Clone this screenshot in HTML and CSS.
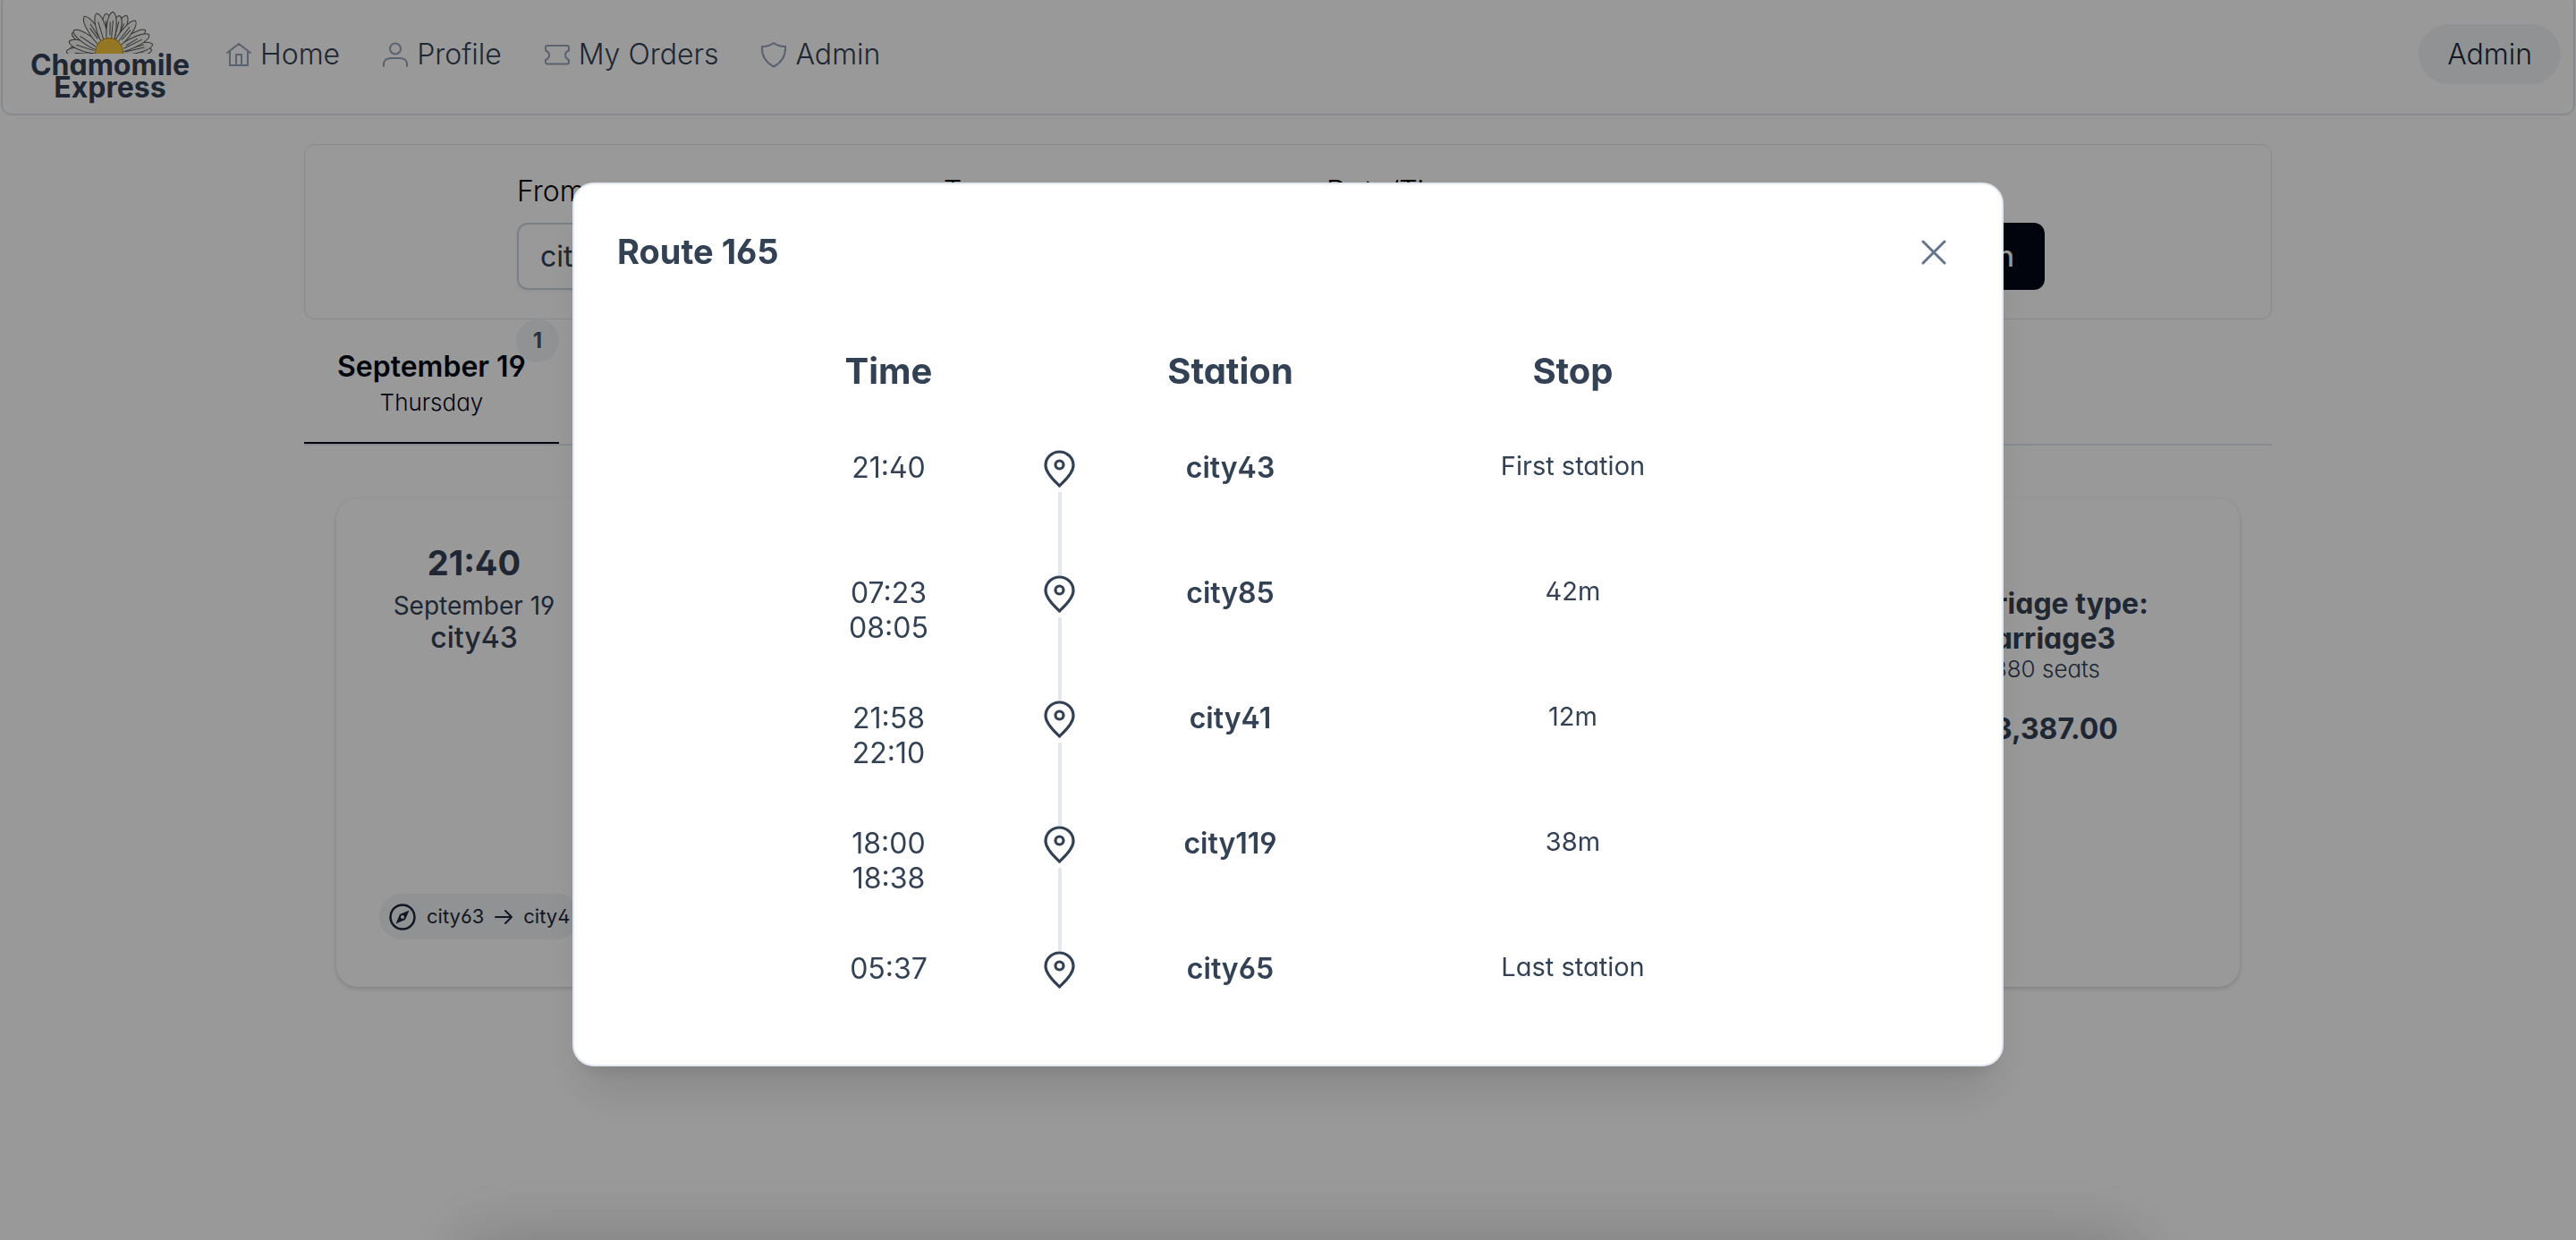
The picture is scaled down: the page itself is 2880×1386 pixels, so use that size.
FILE: index.html
```html
<!DOCTYPE html>
<html lang="en">
<head>
<meta charset="utf-8">
<title>Chamomile Express</title>
<link rel="stylesheet" href="styles.css">
</head>
<body>
<svg class="defs" aria-hidden="true">
  <symbol id="pin" viewBox="0 0 35 42"><path d="M17.500 40C13 35.500 2 26.500 2 17.300A15.500 15.300 0 0 1 33 17.300C33 26.500 22 35.500 17.500 40Z" stroke-width="3.200"/><circle cx="17.500" cy="16.500" r="4.500" stroke-width="3.200"/></symbol>
</svg>
<header class="topbar">
  <a class="logo" href="#">
    <svg class="flower" viewBox="0 0 102 48" aria-hidden="true">
      <g fill="#f3f6f0" stroke="#555" stroke-width="1">
        <g transform="translate(50 49)">
          <path d="M-3-12C-7-24-5-42 1-44C6-42 7-26 3-12ZM-1-18L-1-36" transform="rotate(-82)"/>
          <path d="M-3-12C-7-24-6-46 0-48C6-46 7-26 3-12ZM-1-18L-1-38" transform="rotate(-86)"/>
          <path d="M-3-12C-7-24-6-46 0-48C6-46 7-26 3-12ZM1-18L1-38" transform="rotate(84)"/>
          <path d="M-3-12C-7-24-6-46 0-48C6-46 7-26 3-12ZM-1-18L-1-38" transform="rotate(-60)"/>
          <path d="M-3-12C-7-24-6-46 0-49C6-46 7-26 3-12ZM1-18L1-40" transform="rotate(56)"/>
          <path d="M-3-12C-7-24-6-44 0-46C6-44 7-26 3-12ZM-1-18L-1-38" transform="rotate(-4)"/>
          <path d="M-3-12C-7-24-6-46 0-48C6-46 7-26 3-12ZM1-18L1-38" transform="rotate(24)"/>
          <path d="M-3-12C-7-24-6-45 0-47C6-45 7-26 3-12ZM-1-18L-1-38" transform="rotate(-72)"/>
          <path d="M-3-12C-7-24-6-48 0-50C6-48 7-26 3-12ZM1-18L1-40M-1-24L-2-40" transform="rotate(77)"/>
          <path d="M-3-12C-7-24-6-46 0-48C6-46 7-26 3-12ZM-1-18L-1-38" transform="rotate(-56)"/>
          <path d="M-3-12C-7-24-6-48 0-50C6-48 7-26 3-12ZM1-18L1-40M-1-22L-2-36" transform="rotate(64)"/>
          <path d="M-3-12C-7-24-7-48 0-51C6-48 7-26 3-12ZM1-18L1-40M-1-22L-2-36" transform="rotate(-33)"/>
          <path d="M-3-12C-7-24-6-46 0-48C6-46 7-26 3-12ZM-1-18L-1-38" transform="rotate(-17)"/>
          <path d="M-3-12C-7-24-6-43 0-45C6-43 7-26 3-12ZM1-18L1-38" transform="rotate(15)"/>
          <path d="M-3-12C-7-24-6-46 0-48C6-46 7-26 3-12ZM-1-18L-1-38M1-22L2-36" transform="rotate(38)"/>
          <path d="M-3-12C-7-24-6-46 0-48C6-46 7-26 3-12ZM1-18L1-38M-1-22L-2-36" transform="rotate(5)"/>
        </g>
      </g>
      <circle cx="50" cy="46" r="15.500" fill="#f5c63c" stroke="#b58a1e"/>
    </svg>
    <span class="brand">Chamomile<br>Express</span>
  </a>
  <nav class="nav">
    <a href="#"><svg viewBox="0 0 30 30"><path d="M2 13L15 3L28 13M5 11V27H25V11M12 27V15H18V27"/></svg>Home</a>
    <a href="#"><svg viewBox="0 0 30 30"><circle cx="15" cy="8.500" r="6"/><path d="M2 28V26C2 21 6 19 10 19H20C24 19 28 21 28 26V28"/></svg>Profile</a>
    <a href="#"><svg viewBox="0 0 30 30"><path d="M4 5H26Q28 5 28 7V10.500Q24 12 24 15.500T28 21V23.500Q28 25.500 26 25.500H4Q2 25.500 2 23.500V21Q6 19 6 15.500T2 10.500V7Q2 5 4 5Z"/></svg>My Orders</a>
    <a href="#"><svg viewBox="0 0 30 30"><path d="M15 2Q20 6 28 6Q29 21 15 28.500Q1 21 2 6Q10 6 15 2Z"/></svg>Admin</a>
  </nav>
  <button class="account" type="button">Admin</button>
</header>
<main class="page">
  <form class="search">
    <div class="field"><label for="from">From</label><input id="from" value="city43"></div>
    <div class="field"><label for="to">To</label><input id="to" value="city65"></div>
    <div class="field"><label for="date">Date/Time</label><input id="date"></div>
    <button class="submit" type="button">Search train</button>
  </form>
  <div class="tabs" role="tablist">
    <button class="tab" type="button" role="tab" aria-selected="true">
      <span class="tab-date">September 19</span><span class="tab-day">Thursday</span>
      <span class="badge">1</span>
    </button>
  </div>
  <article class="trip">
    <div class="departure">
      <strong class="clock">21:40</strong>
      <span class="date">September 19</span>
      <span class="city">city43</span>
      <button class="route" type="button">
        <svg class="compass" viewBox="0 0 30 30"><circle cx="15" cy="15" r="13.500" fill="none" stroke="currentColor" stroke-width="2.500"/><path fill="currentColor" fill-rule="evenodd" d="M22.500 7.500L18 18L7.500 22.500L12 12ZM15 13A2 2 0 1 0 15 17A2 2 0 1 0 15 13Z"/></svg>
        <span>city63</span>
        <svg class="arrow" viewBox="0 0 20 16"><path d="M1 8H19M12 1L19 8L12 15"/></svg>
        <span>city4</span>
      </button>
    </div>
    <div class="fare">
      <strong>Carriage type:</strong>
      <strong>carriage3</strong>
      <span>380 seats</span>
      <strong class="price">$3,387.00</strong>
    </div>
  </article>
</main>
<div class="overlay">
  <section class="dialog" role="dialog" aria-modal="true" aria-labelledby="route-title">
    <div class="dialog-head">
      <h2 id="route-title">Route 165</h2>
      <button class="close" type="button" aria-label="Close"><svg viewBox="0 0 28 28"><path d="M2 2L26 26M26 2L2 26"/></svg></button>
    </div>
    <table class="stops">
      <thead><tr><th>Time</th><th></th><th>Station</th><th class="stop">Stop</th></tr></thead>
      <tbody>
        <tr><td>21:40</td><td><div class="track"><svg><use href="#pin"/></svg></div></td><td class="station">city43</td><td class="stop">First station</td></tr>
        <tr><td>07:23<br>08:05</td><td><div class="track"><svg><use href="#pin"/></svg></div></td><td class="station">city85</td><td class="stop">42m</td></tr>
        <tr><td>21:58<br>22:10</td><td><div class="track"><svg><use href="#pin"/></svg></div></td><td class="station">city41</td><td class="stop">12m</td></tr>
        <tr><td>18:00<br>18:38</td><td><div class="track"><svg><use href="#pin"/></svg></div></td><td class="station">city119</td><td class="stop">38m</td></tr>
        <tr><td>05:37</td><td><div class="track"><svg><use href="#pin"/></svg></div></td><td class="station">city65</td><td class="stop">Last station</td></tr>
      </tbody>
    </table>
  </section>
</div>
<div class="bottom-glow"></div>
</body>
</html>
```
FILE: styles.css
```css
* { box-sizing: border-box; }
body {
  margin: 0;
  min-height: 100vh;
  overflow: hidden;
  background: #fff;
  color: #334155;
  font-family: Inter, "Liberation Sans", sans-serif;
  font-size: 32px;
  line-height: 39px;
  font-optical-sizing: none;
  font-feature-settings: "cv02", "cv03", "cv04", "cv11";
}
button, input { font: inherit; font-feature-settings: inherit; color: inherit; }
button { border: 0; background: none; padding: 0; }
a { color: inherit; text-decoration: none; }
svg { fill: none; stroke-linecap: round; stroke-linejoin: round; flex: none; }
.defs { position: absolute; width: 0; height: 0; }

.topbar {
  display: flex;
  align-items: center;
  height: 137px;
  margin: -8px 1px 0;
  padding: 0 14px 0 30px;
  border: 2px solid #e2e8f0;
  border-radius: 12px;
}
.logo { display: flex; flex-direction: column; align-items: center; width: 180px; }
.flower { width: 102px; height: 48px; }
.brand { font-weight: 700; line-height: 25px; text-align: center; }
.nav { display: flex; gap: 47px; margin-left: 39px; font-weight: 300; }
.nav a { display: flex; align-items: center; gap: 9px; }
.nav svg { width: 30px; height: 30px; stroke: #94a3b8; stroke-width: 2; }
.account {
  margin-left: auto;
  padding: 14px 32px;
  border-radius: 34px;
  background: #f1f3f6;
  color: #1e293b;
  font-weight: 300;
}

.page { max-width: 2200px; margin: 32px auto 0; }
.search {
  display: flex;
  align-items: flex-end;
  gap: 32px;
  padding: 32px 253px 32px 237px;
  border: 1px solid #e2e8f0;
  border-radius: 12px;
  color: #000;
}
.field { display: flex; flex-direction: column; gap: 16px; width: 445px; font-weight: 300; }
.field + .field { width: 396px; }
.field input {
  width: 100%;
  height: 75px;
  padding: 0 24px;
  border: 2px solid #cbd5e1;
  border-radius: 12px;
  color: #334155;
  font-weight: 400;
  box-shadow: 0 2px 4px rgba(18, 18, 23, .05);
}
.submit {
  height: 75px;
  margin-left: auto;
  padding: 0 34px;
  border-radius: 12px;
  background: #020617;
  color: #fff;
  font-weight: 500;
}
.tabs { display: flex; border-bottom: 2px solid #e2e8f0; }
.tab {
  position: relative;
  display: flex;
  flex-direction: column;
  align-items: center;
  padding: 32px 37px 25px;
  border-bottom: 2px solid #020617;
  color: #020617;
}
.tab-date { font-weight: 600; line-height: 41px; }
.tab-day { font-size: 26px; font-weight: 300; }
.badge {
  position: absolute;
  top: 0;
  right: 0;
  width: 48px;
  height: 48px;
  border-radius: 24px;
  background: #f1f3f6;
  color: #475569;
  font-size: 24px;
  font-weight: 700;
  line-height: 48px;
}
.trip {
  display: flex;
  justify-content: space-between;
  height: 546px;
  margin: 59px 36px 0;
  padding: 48px 48px 53px;
  border-radius: 24px;
  box-shadow: 0 2px 6px rgba(0, 0, 0, .1), 0 2px 4px rgba(0, 0, 0, .06);
}
.departure, .fare { display: flex; flex-direction: column; align-items: center; }
.departure { width: 212px; }
.clock { font-size: 38px; line-height: 48px; }
.date { font-size: 28px; font-weight: 400; line-height: 40px; padding-top: 4px; }
.city { font-weight: 500; line-height: 32px; }
.route {
  display: flex;
  align-items: center;
  align-self: flex-start;
  gap: 12px;
  height: 51px;
  margin-top: auto;
  padding: 0 11px;
  border-radius: 26px;
  background: #f1f3f6;
  color: #1e293b;
  font-size: 22px;
}
.compass { width: 30px; height: 30px; }
.arrow { width: 20px; height: 16px; stroke: currentColor; stroke-width: 2; }
.fare { width: 336px; padding-top: 50px; }
.fare span { font-size: 26px; font-weight: 300; line-height: 30px; }
.fare .price { margin-top: 32px; }

.overlay {
  position: fixed;
  inset: 0;
  display: flex;
  align-items: center;
  justify-content: center;
  padding-top: 9px;
  background: rgba(0, 0, 0, .4);
}
.dialog {
  width: 1600px;
  border: 2px solid #e2e8f0;
  border-radius: 24px;
  background: #fff;
  box-shadow: 0 40px 50px -10px rgba(0, 0, 0, .1), 0 16px 20px -12px rgba(0, 0, 0, .1);
  padding: 40px 48px;
}
.dialog-head { display: flex; align-items: center; justify-content: space-between; height: 72px; }
.dialog-head h2 { margin: 0; font-size: 38px; font-weight: 700; }
.close { display: flex; align-items: center; justify-content: center; width: 56px; height: 56px; }
.close svg { width: 28px; height: 28px; stroke: #64748b; stroke-width: 3; }
.stops {
  width: 1148px;
  margin: 73px 0 0 208px;
  border-collapse: collapse;
  table-layout: fixed;
  text-align: center;
}
.stops th { width: 191px; height: 112px; padding: 0; font-size: 40px; line-height: 48px; vertical-align: top; }
.stops th.stop { width: 575px; }
.stops td { padding: 0; vertical-align: top; }
.stops .station { font-weight: 600; }
.stops td.stop { font-size: 29px; line-height: 36px; }
.track { display: flex; flex-direction: column; align-items: center; gap: 5px; height: 140px; }
.track svg { width: 35px; height: 42px; stroke: #334155; }
.track::after { content: ""; flex: 1; width: 4px; background: #e2e8f0; }
tr:last-child .track { height: 87px; }
tr:last-child .track::after { display: none; }
.bottom-glow {
  position: fixed;
  top: 100%;
  left: 18%;
  right: 17%;
  height: 80px;
  box-shadow: 0 0 80px rgba(0, 0, 0, .2);
}
```
